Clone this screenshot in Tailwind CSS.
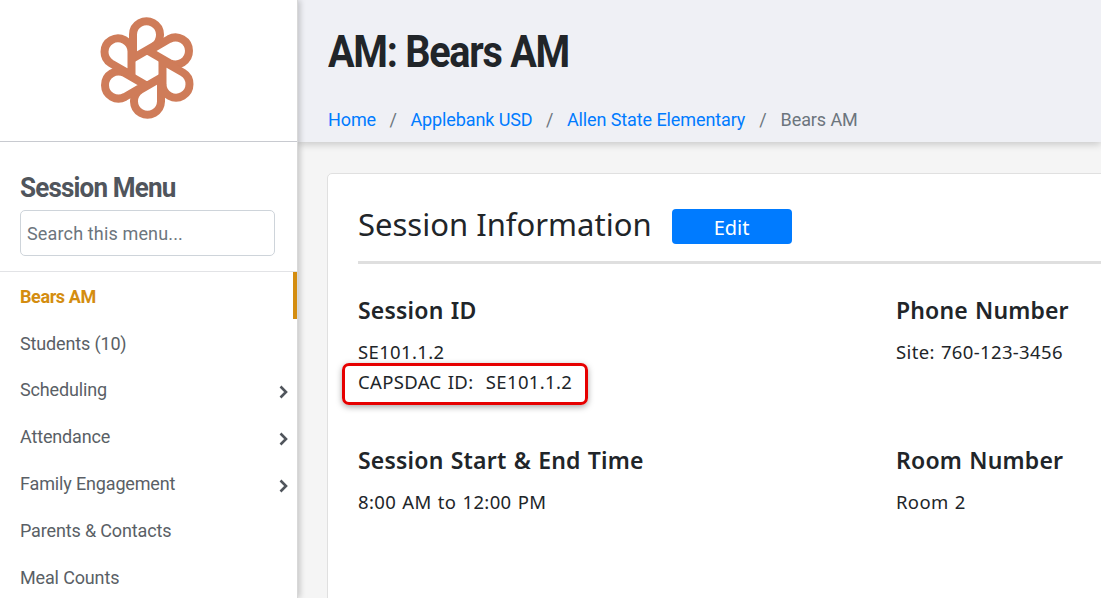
<!DOCTYPE html>
<html lang="en">

<head>
	<title>Session</title>
	<meta charset="UTF-8">
	<script src="https://cdn.jsdelivr.net/npm/@tailwindcss/browser@4"></script>
</head>

<body class="w-[1101px] h-[598px] overflow-hidden bg-[#f5f5f5] font-['Roboto',sans-serif]">
	<div class="flex h-[598px] overflow-hidden">
		<!-- sidebar -->
		<aside class="w-[298px] shrink-0 h-full bg-white border-r border-[#d8d8d8] shadow-[2px_0_6px_rgba(0,0,0,0.2)] relative z-10 overflow-hidden">
			<div class="h-[142px] border-b border-[#c8cad0] flex items-center justify-center pb-[6px] pr-[4px]">
				<svg class="w-[100px] h-[104px]" viewBox="-50 -52 100 104" fill="none" stroke="#cf7c59" stroke-width="8" stroke-linejoin="round">
					<path d="M-14 -9.8V-33.5A13.5 13.5 0 1 1 6.75 -21.8Z"/>
					<path transform="rotate(60)" d="M-14 -9.8V-33.5A13.5 13.5 0 1 1 6.75 -21.8Z"/>
					<path transform="rotate(120)" d="M-14 -9.8V-33.5A13.5 13.5 0 1 1 6.75 -21.8Z"/>
					<path transform="rotate(180)" d="M-14 -9.8V-33.5A13.5 13.5 0 1 1 6.75 -21.8Z"/>
					<path transform="rotate(240)" d="M-14 -9.8V-33.5A13.5 13.5 0 1 1 6.75 -21.8Z"/>
					<path transform="rotate(300)" d="M-14 -9.8V-33.5A13.5 13.5 0 1 1 6.75 -21.8Z"/>
				</svg>
			</div>
			<div class="px-5 pt-7 pb-[15px] border-b border-[#e2e3e6]">
				<h2 class="text-[28px] leading-[36px] font-bold text-[#50555c] tracking-[-0.9px] origin-left scale-x-[0.93]">Session Menu</h2>
				<input class="mt-[4px] block w-[255px] h-[46px] px-[6px] border border-[#ced4da] rounded-[5px] text-[18px] tracking-[0.15px] placeholder:text-[#6c757d]" placeholder="Search this menu...">
			</div>
			<nav class="text-[18px] text-[#5a5f66] tracking-[-0.15px]">
				<div class="h-[47px] flex items-center pl-5 pt-[1px] border-r-4 border-[#d48d10] font-bold text-[#d48d10] tracking-[-0.4px]">Bears AM</div>
				<div class="h-[47px] flex items-center pl-5 pt-[1px]">Students (10)</div>
				<div class="h-[46px] flex items-center justify-between pl-5 pt-[1px] pr-[9px]">Scheduling
					<svg class="w-[9px] h-[14px] mt-[5px]" viewBox="0 0 9 14" fill="none" stroke="#50555c" stroke-width="2.6"><path d="M1.5 1.5 7 7 1.5 12.500"/></svg>
				</div>
				<div class="h-[47px] flex items-center justify-between pl-5 pt-[1px] pr-[9px]">Attendance
					<svg class="w-[9px] h-[14px] mt-[5px]" viewBox="0 0 9 14" fill="none" stroke="#50555c" stroke-width="2.6"><path d="M1.5 1.5 7 7 1.5 12.500"/></svg>
				</div>
				<div class="h-[47px] flex items-center justify-between pl-5 pt-[1px] pr-[9px]">Family Engagement
					<svg class="w-[9px] h-[14px] mt-[5px]" viewBox="0 0 9 14" fill="none" stroke="#50555c" stroke-width="2.6"><path d="M1.5 1.5 7 7 1.5 12.500"/></svg>
				</div>
				<div class="h-[47px] flex items-center pl-5 pt-[1px]">Parents &amp; Contacts</div>
				<div class="h-[47px] flex items-center pl-5 pt-[1px]">Meal Counts</div>
			</nav>
		</aside>

		<main class="flex-1 min-w-0 overflow-hidden">
			<!-- page header -->
			<header class="h-[142px] bg-[#eff0f5] shadow-[0_2px_8px_rgba(0,0,0,0.2)] pl-[30px] relative">
				<h1 class="pt-[23px] text-[44px] leading-[58px] font-bold text-[#212529] tracking-[-1.4px] origin-left scale-x-[0.9]">AM: Bears AM</h1>
				<div class="mt-[27px] flex text-[18px] leading-[24px] tracking-[-0.1px]">
					<a class="text-[#007bff]">Home</a><span class="text-[#6c757d] px-[13.5px]">/</span>
					<a class="text-[#007bff]">Applebank USD</a><span class="text-[#6c757d] px-[13.5px]">/</span>
					<a class="text-[#007bff]">Allen State Elementary</a><span class="text-[#6c757d] px-[14px]">/</span>
					<span class="text-[#6c757d]">Bears AM</span>
				</div>
			</header>

			<!-- card -->
			<section class="relative ml-[29px] mt-[31px] w-[900px] h-[500px] bg-white border border-[#e0e0e0] rounded-[5px] px-[30px] pt-[29px] font-['Noto_Sans',sans-serif] text-[#212529]">
				<div class="flex items-center h-[46px]">
					<h2 class="text-[31px] leading-[46px] -mt-[4px]">Session Information</h2>
					<button class="ml-[20px] w-[120px] h-[35px] pt-[3px] bg-[#007bff] rounded-[4px] text-white text-[20px]">Edit</button>
				</div>
				<div class="mt-[12px] h-[3px] bg-[#dfdfdf]"></div>
				<div class="grid grid-cols-[538px_1fr] mt-[28px] text-[18.5px] leading-[30px] tracking-[0.35px] [word-spacing:1px]">
					<div class="h-[150px]">
						<h3 class="text-[23px] leading-[36px] font-semibold tracking-[0.2px] mb-[9px]">Session ID</h3>
						<p>SE101.1.2</p>
						<p class="whitespace-pre">CAPSDAC ID:  SE101.1.2</p>
					</div>
					<div>
						<h3 class="text-[23px] leading-[36px] font-semibold tracking-[0.15px] mb-[9px]">Phone Number</h3>
						<p>Site: 760-123-3456</p>
					</div>
					<div>
						<h3 class="text-[23px] leading-[36px] font-semibold tracking-[0.2px] mb-[9px]">Session Start &amp; End Time</h3>
						<p>8:00 AM to 12:00 PM</p>
					</div>
					<div>
						<h3 class="text-[23px] leading-[36px] font-semibold tracking-[0.2px] mb-[9px]">Room Number</h3>
						<p>Room 2</p>
					</div>
				</div>
				<!-- red callout -->
				<div class="absolute left-[14px] top-[189px] w-[246px] h-[42px] border-[3px] border-[#e60000] rounded-[7px] shadow-[0_2px_6px_rgba(0,0,0,0.35)]"></div>
			</section>
		</main>
	</div>
</body>

</html>
